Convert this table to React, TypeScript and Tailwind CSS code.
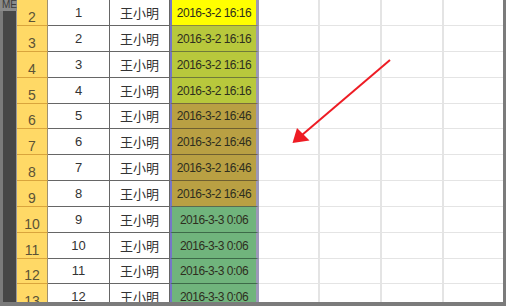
import React from "react";

type Row = { n: number; id: number; time: string; bg: string; line: string; h: string };

const OLIVE = "bg-[#b8c83c]";
const GOLD = "bg-[#b9a043]";
const GREEN = "bg-[#70b47c]";

const rows: Row[] = [
  { n: 2, id: 1, time: "2016-3-2 16:16", bg: "bg-[#ffff00]", line: "border-[#8a8a40]", h: "h-[26px]" },
  { n: 3, id: 2, time: "2016-3-2 16:16", bg: OLIVE, line: "border-[#6f7a3a]", h: "h-[26px]" },
  { n: 4, id: 3, time: "2016-3-2 16:16", bg: OLIVE, line: "border-[#6f7a3a]", h: "h-[26px]" },
  { n: 5, id: 4, time: "2016-3-2 16:16", bg: OLIVE, line: "border-[#7a6a3a]", h: "h-[26px]" },
  { n: 6, id: 5, time: "2016-3-2 16:46", bg: GOLD, line: "border-[#6f5f30]", h: "h-[25px]" },
  { n: 7, id: 6, time: "2016-3-2 16:46", bg: GOLD, line: "border-[#6f5f30]", h: "h-[26px]" },
  { n: 8, id: 7, time: "2016-3-2 16:46", bg: GOLD, line: "border-[#6f5f30]", h: "h-[26px]" },
  { n: 9, id: 8, time: "2016-3-2 16:46", bg: GOLD, line: "border-[#5a6a50]", h: "h-[26px]" },
  { n: 10, id: 9, time: "2016-3-3 0:06", bg: GREEN, line: "border-[#3d6a48]", h: "h-[26px]" },
  { n: 11, id: 10, time: "2016-3-3 0:06", bg: GREEN, line: "border-[#3d6a48]", h: "h-[26px]" },
  { n: 12, id: 11, time: "2016-3-3 0:06", bg: GREEN, line: "border-[#3d6a48]", h: "h-[25px]" },
  { n: 13, id: 12, time: "2016-3-3 0:06", bg: GREEN, line: "border-[#3d6a48]", h: "h-[26px]" },
];

const App = () => {
  return (
    <div className="relative w-[506px] h-[306px] bg-[#7b7b7b] flex overflow-hidden font-['Liberation_Sans',Arial,sans-serif]">
      {/* 左側の暗い帯 */}
      <div className="w-[17px] h-[302px] flex flex-col">
        <div className="h-[11px] bg-[#8a8a8a] overflow-hidden text-[10px] leading-[10px] text-[#3a3a3a] flex justify-end">
          ME
        </div>
        <div className="flex-1 ml-[3px] bg-[#474747] border-r border-[#9a9a9a]" />
      </div>

      {/* シート本体 */}
      <div className="w-[486px] h-[302px] bg-white overflow-hidden">
        {rows.map((r) => (
          <div key={r.n} className={`flex ${r.h}`}>
            <div className="w-[31px] bg-[#ffd966] border-r border-b border-r-[#a09070] border-b-[#d9a43c] flex items-end justify-center pb-[1px] text-[14px] leading-none text-[#5b5236]">
              {r.n}
            </div>
            <div className="w-[62px] border-r border-b border-[#666] flex items-center justify-center text-[13px] text-[#333]">
              {r.id}
            </div>
            <div className="w-[60px] border-r border-b border-[#666] flex items-center justify-center text-[13px] text-[#333] font-['Noto_Sans_CJK_SC',sans-serif]">
              王小明
            </div>
            <div
              className={`w-[89px] ${r.bg} border-l-2 border-l-[#7676c8] border-r-[3px] border-r-[#9c98b8] border-b ${r.line} flex items-center justify-center text-[12px] tracking-[-0.5px] text-[#2e2e1e]`}
            >
              {r.time}
            </div>
            <div className="w-[61px] border-r-2 border-b border-[#e4e4e4]" />
            <div className="w-[62px] border-r-2 border-b border-[#e4e4e4]" />
            <div className="w-[62px] border-r-2 border-b border-[#e4e4e4]" />
            <div className="flex-1 border-b border-[#e4e4e4]" />
          </div>
        ))}
      </div>

      {/* 赤い矢印 */}
      <svg className="absolute left-0 top-0" width="506" height="306" viewBox="0 0 506 306">
        <line x1="390" y1="60" x2="302" y2="135" stroke="#ee1c24" strokeWidth="2" />
        <polygon points="292.5,143 297,128 309.5,140.5" fill="#ee1c24" />
      </svg>
    </div>
  );
};

export default App;
